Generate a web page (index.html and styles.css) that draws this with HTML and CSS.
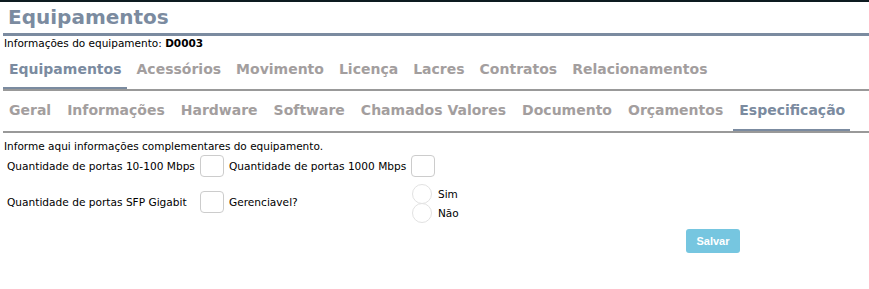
FILE: index.html
```html
<!DOCTYPE html>
<html lang="pt-BR">
<head>
    <meta charset="UTF-8">
    <meta name="viewport" content="width=device-width, initial-scale=1.0">
    <title>Equipamentos - Especificação</title>
    <link rel="stylesheet" href="styles.css">
</head>
<body>
    <div class="topbar"></div>

    <div class="page">
        <h1 class="page-title">Equipamentos</h1>
        <p class="equip-info">Informações do equipamento: <b>D0003</b></p>

        <nav class="tabs tabs-main">
            <a class="tab active">Equipamentos</a>
            <a class="tab">Acessórios</a>
            <a class="tab">Movimento</a>
            <a class="tab">Licença</a>
            <a class="tab">Lacres</a>
            <a class="tab">Contratos</a>
            <a class="tab">Relacionamentos</a>
        </nav>

        <nav class="tabs tabs-sub">
            <a class="tab">Geral</a>
            <a class="tab">Informações</a>
            <a class="tab">Hardware</a>
            <a class="tab">Software</a>
            <a class="tab">Chamados Valores</a>
            <a class="tab">Documento</a>
            <a class="tab">Orçamentos</a>
            <a class="tab active">Especificação</a>
        </nav>

        <section class="spec">
            <p class="spec-intro">Informe aqui informações complementares do equipamento.</p>

            <div class="spec-form">
                <label class="field-label">Quantidade de portas 10-100 Mbps</label>
                <div class="field-input"><input type="text" class="box"></div>
                <label class="field-label">Quantidade de portas 1000 Mbps</label>
                <div class="field-input"><input type="text" class="box"></div>

                <label class="field-label">Quantidade de portas SFP Gigabit</label>
                <div class="field-input"><input type="text" class="box"></div>
                <label class="field-label">Gerenciavel?</label>
                <div class="radios">
                    <label class="radio"><span class="circle"></span>Sim</label>
                    <label class="radio"><span class="circle"></span>Não</label>
                </div>
            </div>

            <div class="actions">
                <button class="btn-save" disabled>Salvar</button>
            </div>
        </section>
    </div>
</body>
</html>
```

FILE: styles.css
```css
body {
    margin: 0;
    background: #fff;
    color: #000;
    font-family: "DejaVu Sans", Verdana, sans-serif;
    font-size: 11px;
}
.topbar {
    height: 2px;
    background: #0d1b20;
}
.page {
    margin-left: 3px;
}
.page-title {
    margin: 0;
    padding-left: 5px;
    height: 31px;
    line-height: 31px;
    font-size: 20px;
    font-weight: bold;
    color: #7b8ba0;
    border-bottom: 3px solid #7b8ba0;
}
.equip-info {
    margin: 0;
    padding-left: 1px;
    line-height: 15px;
    font-size: 10.5px;
}
.tabs {
    display: flex;
    gap: 4px;
    border-bottom: 2px solid #999;
}
.tabs-sub {
    gap: 5px;
}
.tab {
    display: block;
    flex-shrink: 0;
    white-space: nowrap;
    padding: 9px 5px 9px 6px;
    line-height: 18px;
    font-size: 14px;
    font-weight: bold;
    color: #a39e9e;
    border-bottom: 2px solid transparent;
    cursor: pointer;
}
.tab.active {
    color: #7b8ba0;
    border-bottom-color: #7b8ba0;
}
.tabs-sub .tab {
    padding-top: 10px;
    padding-bottom: 10px;
}
.spec {
    padding-top: 6px;
}
.spec-intro {
    margin: 0 0 2px 1px;
    line-height: 14px;
    font-size: 10.5px;
}
.spec-form {
    display: grid;
    grid-template-columns: 193px 29px 182px auto;
    align-items: center;
    row-gap: 4px;
}
.field-label {
    padding-left: 4px;
    font-size: 10.6px;
}
.field-input {
    padding-left: 4px;
}
.box {
    display: block;
    box-sizing: border-box;
    width: 24px;
    height: 22px;
    margin: 0;
    border: 1px solid #ccc;
    border-radius: 4px;
    background: #fff;
}
.radios {
    padding: 3px 0 0 5px;
}
.radio {
    display: flex;
    align-items: center;
    gap: 6px;
    height: 19px;
    font-size: 10.5px;
}
.circle {
    box-sizing: border-box;
    width: 20px;
    height: 20px;
    border: 1px solid #e2e2e2;
    border-radius: 50%;
    background: #fff;
}
.actions {
    padding: 7px 0 0 683px;
}
.btn-save {
    width: 54px;
    height: 24px;
    border: none;
    border-radius: 3px;
    background: #76c6e0;
    color: #fff;
    font-family: "Liberation Sans", Arial, sans-serif;
    font-size: 11px;
    font-weight: bold;
}
```
